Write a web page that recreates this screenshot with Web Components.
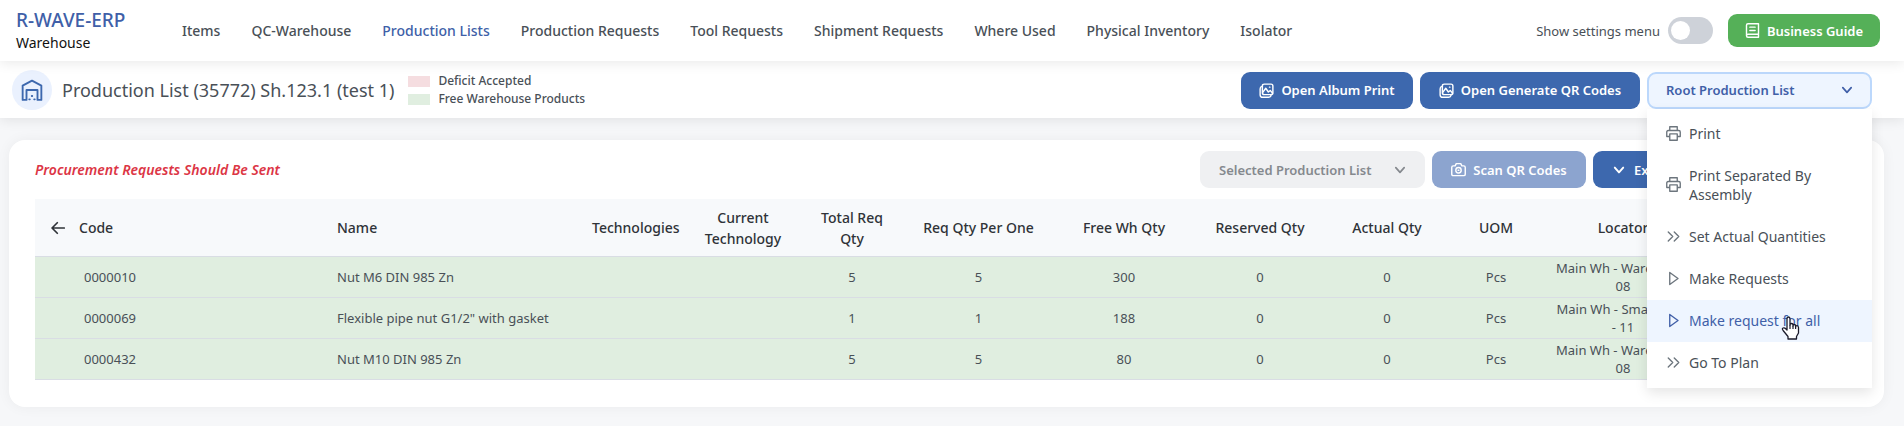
<!DOCTYPE html>
<html lang="en">
<head>
<meta charset="utf-8">
<title>Production Lists - R-WAVE-ERP</title>
<style>
  body { margin: 0; background: #f6f7f9; color: #495057; font-family: "Noto Sans", "Open Sans", sans-serif; }
</style>
</head>
<body>
<erp-app></erp-app>

<script>
const ICONS = {
  book: '<path d="M18 15H4q-2 0-2 2t2 2h14V1H4Q2 1 2 3v14"/><path d="M6.500 5.500h7M6.500 10h7"/>',
  images: '<path d="M7 1.500h9q2.500 0 2.500 2.500v9q0 2.500-2.500 2.500H7q-2.500 0-2.500-2.500V4Q4.500 1.500 7 1.500z"/><path d="M4 4.500Q1.500 5 1.500 8v7.500q0 3.500 3.500 3.500h8q2.500 0 3-2.500M5 12.500l4-5.500 3.500 5 2.500-2 3 3.500M14 5.500h.5"/>',
  camera: '<path d="M1 7.200q0-2 2-2h2.500l1.500-3h6l1.500 3H17q2 0 2 2v9q0 2-2 2H3q-2 0-2-2z"/><circle cx="10" cy="11" r="3.600"/><path d="M9.500 11h1"/>',
  printer: '<path d="M5 6V1h10v5M5 14H1V8q0-2 2-2h14q2 0 2 2v6h-4M5 10.500h10V19H5z"/>',
  right2: '<path d="M3 4l6 6-6 6M11 4l6 6-6 6"/>',
  play: '<path d="M5 2v16l11-8z"/>',
  down: '<path d="M3 6l7 8 7-8"/>',
  left: '<path d="M19 10H2M9 2.500L1.500 10 9 17.500"/>',
  house: '<path d="M1.500 19V6L10 1.500 18.500 6v13H15V10H5v9z"/><path d="M7.500 18.500h.5M12 18.500h.5M9.800 15.500h.4"/>'
};

class ErpIcon extends HTMLElement {
  connectedCallback() {
    const w = this.getAttribute('weight') || '1.800';
    this.attachShadow({ mode: 'open' }).innerHTML = `
      <style>
        :host { display: inline-flex; flex: none; width: 15px; height: 15px; }
        svg { width: 100%; height: 100%; }
      </style>
      <svg viewBox="0 0 20 20" fill="none" stroke="currentColor" stroke-width="${w}" stroke-linejoin="round" stroke-linecap="round" aria-hidden="true">${ICONS[this.getAttribute('name')]}</svg>`;
  }
}
customElements.define('erp-icon', ErpIcon);

class ErpButton extends HTMLElement {
  connectedCallback() {
    const off = this.hasAttribute('disabled') ? 'disabled' : '';
    this.attachShadow({ mode: 'open' }).innerHTML = `
      <style>
        :host { display: block; --bg: #3d68ae; --h: 37px; }
        :host([tone=green]) { --bg: #55b058; --h: 33px; }
        :host([disabled]) { --bg: #8ca4cf; }
        button { box-sizing: border-box; display: flex; align-items: center; justify-content: center; gap: 7px;
          width: 100%; height: var(--h); padding: 0 16px; border: 0; border-radius: 9px;
          background: var(--bg); color: #fff; font: 600 13px/18px "Noto Sans", sans-serif; white-space: nowrap; }
        :host([align=start]) button { justify-content: flex-start; padding: 0 20px; gap: 9px; }
        :host([align=start]) erp-icon { width: 12px; height: 12px; }
      </style>
      <button type="button" ${off}><erp-icon name="${this.getAttribute('icon')}" weight="${this.getAttribute('weight') || '1.900'}"></erp-icon><slot></slot></button>`;
  }
}
customElements.define('erp-button', ErpButton);

class ErpDropdown extends HTMLElement {
  connectedCallback() {
    const off = this.hasAttribute('disabled') ? 'disabled' : '';
    const open = this.hasAttribute('open');
    this.attachShadow({ mode: 'open' }).innerHTML = `
      <style>
        :host { display: block; position: relative; width: 225px; }
        button { box-sizing: border-box; display: flex; align-items: center; justify-content: space-between;
          width: 100%; height: 37px; padding: 0 17px; border: 2px solid #bcd8fc; border-radius: 9px;
          background: #eef5ff; color: #405fa8; font: 600 13px/18px "Noto Sans", sans-serif; }
        :host([disabled]) button { background: #eff0f2; border-color: #eff0f2; color: #85898e; }
        erp-icon { width: 12px; height: 12px; }
        .menu { position: absolute; z-index: 5; top: 100%; left: 0; right: 0; padding: 4px 0;
          background: #fff; box-shadow: 0 5px 12px rgba(0,0,0,.1); }
      </style>
      <button type="button" ${off} aria-haspopup="menu" aria-expanded="${open}">${this.getAttribute('label')}<erp-icon name="down" weight="2.800"></erp-icon></button>
      ${open ? '<div class="menu" role="menu"><slot></slot></div>' : ''}`;
  }
}
customElements.define('erp-dropdown', ErpDropdown);

class ErpMenuItem extends HTMLElement {
  connectedCallback() {
    const active = this.hasAttribute('active');
    this.attachShadow({ mode: 'open' }).innerHTML = `
      <style>
        :host { display: block; position: relative; }
        button { display: flex; align-items: center; gap: 8px; width: 100%; padding: 11px 18px 12px 19px; border: 0;
          background: none; color: #495057; font: 400 14px/19px "Noto Sans", sans-serif; text-align: left; }
        erp-icon { color: #6c757d; }
        :host([active]) button { background: #eef5ff; color: #405fa8; }
        :host([active]) erp-icon { color: #405fa8; }
        .hand { position: absolute; left: 134px; top: 16px; width: 19px; height: 24px; }
      </style>
      <button type="button" role="menuitem"><erp-icon name="${this.getAttribute('icon')}"></erp-icon><span><slot></slot></span></button>
      ${active ? `<svg class="hand" viewBox="0 0 19 24" aria-hidden="true"><path d="M6 14V3q0-2 1.500-2T9 3v6q0-1.500 1.500-1.500T12 9v1q0-1.500 1.300-1.500T14.600 10v1q0-1.300 1.300-1.300T17.500 11.500V17l-2 3.500V23H7v-2.500L2.500 15Q.5 12.500 2 12t3 1z" fill="#fff" stroke="#1b1b2b" stroke-width="1.300" stroke-linejoin="round"/><path d="M9 9v4M12 10v3M14.600 11v2" stroke="#1b1b2b" stroke-width="1.200" fill="none"/></svg>` : ''}`;
  }
}
customElements.define('erp-menu-item', ErpMenuItem);

class ErpHeader extends HTMLElement {
  connectedCallback() {
    const items = ['Items', 'QC-Warehouse', 'Production Lists', 'Production Requests', 'Tool Requests', 'Shipment Requests', 'Where Used', 'Physical Inventory', 'Isolator'];
    this.attachShadow({ mode: 'open' }).innerHTML = `
      <style>
        :host { display: block; position: relative; z-index: 3; }
        header { box-sizing: border-box; display: flex; align-items: center; min-height: 61px; padding: 0 24px 0 16px;
          background: #fff; box-shadow: 0 2px 12px rgba(0,0,0,.09); }
        .brand { width: 166px; }
        .brand a { display: block; color: #405fa8; font-weight: 500; font-size: 19px; line-height: 24px; text-decoration: none; }
        .brand span { display: block; color: #111; font-size: 14px; line-height: 22px; }
        nav { display: flex; flex: 1; gap: 31px; font-weight: 500; font-size: 14px; line-height: 20px; white-space: nowrap; }
        nav a { color: #495057; text-decoration: none; }
        nav a[aria-current] { color: #405fa8; }
        label { display: flex; align-items: center; gap: 8px; margin-right: 15px; font-size: 13px; line-height: 18px; }
        input { appearance: none; box-sizing: border-box; width: 45px; height: 27px; margin: 0; padding: 4px 3px; border-radius: 14px; background: #ced2d9; }
        input::before { content: ""; display: block; width: 19px; height: 19px; border-radius: 50%; background: #fff; }
        erp-button { width: 152px; }
      </style>
      <header>
        <div class="brand"><a href="#">R-WAVE-ERP</a><span>Warehouse</span></div>
        <nav>${items.map(t => `<a href="#"${t === 'Production Lists' ? ' aria-current="page"' : ''}>${t}</a>`).join('')}</nav>
        <label>Show settings menu<input type="checkbox" role="switch"></label>
        <erp-button tone="green" icon="book">Business Guide</erp-button>
      </header>`;
  }
}
customElements.define('erp-header', ErpHeader);

class ErpTitleBar extends HTMLElement {
  connectedCallback() {
    this.attachShadow({ mode: 'open' }).innerHTML = `
      <style>
        :host { display: block; position: relative; z-index: 2; }
        section { box-sizing: border-box; display: flex; align-items: center; min-height: 57px; padding: 1px 32px 0 12px;
          background: #fff; box-shadow: 0 2px 12px rgba(0,0,0,.09); }
        .badge { display: flex; align-items: center; justify-content: center; width: 40px; height: 40px; border-radius: 50%; background: #eaf1fe; color: #3d68ae; }
        .badge erp-icon { width: 22px; height: 22px; }
        h1 { margin: 0 14px 0 10px; font-weight: 400; font-size: 18px; line-height: 24px; white-space: nowrap; }
        ul { flex: 1; margin: 0; padding: 0; list-style: none; font-weight: 500; font-size: 12px; line-height: 18px; }
        li { display: flex; align-items: center; gap: 8px; }
        li::before { content: ""; width: 22px; height: 11px; background: #f5dde0; }
        li.free::before { background: #e0eee0; }
        .actions { display: flex; gap: 7px; }
        .album { width: 172px; }
        .qr { width: 220px; }
      </style>
      <section>
        <div class="badge"><erp-icon name="house" weight="1.700"></erp-icon></div>
        <h1>Production List (35772) Sh.123.1 (test 1)</h1>
        <ul><li>Deficit Accepted</li><li class="free">Free Warehouse Products</li></ul>
        <div class="actions">
          <erp-button class="album" icon="images">Open Album Print</erp-button>
          <erp-button class="qr" icon="images">Open Generate QR Codes</erp-button>
          <erp-dropdown label="Root Production List" open>
            <erp-menu-item icon="printer">Print</erp-menu-item>
            <erp-menu-item icon="printer">Print Separated By Assembly</erp-menu-item>
            <erp-menu-item icon="right2">Set Actual Quantities</erp-menu-item>
            <erp-menu-item icon="play">Make Requests</erp-menu-item>
            <erp-menu-item icon="play" active>Make request for all</erp-menu-item>
            <erp-menu-item icon="right2">Go To Plan</erp-menu-item>
          </erp-dropdown>
        </div>
      </section>`;
  }
}
customElements.define('erp-title-bar', ErpTitleBar);

class ErpTable extends HTMLElement {
  connectedCallback() {
    const heads = ['Technologies', 'Current Technology', 'Total Req Qty', 'Req Qty Per One', 'Free Wh Qty', 'Reserved Qty', 'Actual Qty', 'UOM', 'Locator'];
    const widths = [290, 255, 110, 106, 112, 141, 150, 122, 132, 86, 168, 151];
    const rows = [
      ['0000010', 'Nut M6 DIN 985 Zn', '', '', 5, 5, 300, 0, 0, 'Pcs', 'Main Wh - Warehouse<br>08'],
      ['0000069', 'Flexible pipe nut G1/2" with gasket', '', '', 1, 1, 188, 0, 0, 'Pcs', 'Main Wh - Small Parts<br>- 11'],
      ['0000432', 'Nut M10 DIN 985 Zn', '', '', 5, 5, 80, 0, 0, 'Pcs', 'Main Wh - Warehouse<br>08']
    ];
    this.attachShadow({ mode: 'open' }).innerHTML = `
      <style>
        :host { display: block; }
        table { width: 100%; table-layout: fixed; border-spacing: 0; font-size: 13px; line-height: 18px; text-align: center; }
        th, td { box-sizing: border-box; padding: 0 12px; border-bottom: 1px solid #d9dde4; }
        th { height: 58px; background: #f7f9fb; color: #2f3338; font-weight: 500; font-size: 14px; line-height: 21px; }
        td { height: 41px; padding: 0 4px; background: #e0eee0; }
        th:nth-child(-n+2), td:nth-child(-n+2) { text-align: left; }
        th:nth-child(2), td:nth-child(2) { padding: 0 12px; }
        td:first-child { padding-left: 49px; }
        th:first-child { padding-left: 16px; }
        .sort { display: flex; align-items: center; gap: 14px; }
        .sort erp-icon { width: 14px; height: 14px; }
      </style>
      <table>
        <colgroup>${widths.map(w => `<col style="width:${w}px">`).join('')}</colgroup>
        <thead><tr><th><span class="sort"><erp-icon name="left" weight="2.400"></erp-icon>Code</span></th><th>Name</th>${heads.map(h => `<th>${h}</th>`).join('')}<th></th></tr></thead>
        <tbody>${rows.map(r => `<tr>${r.map(c => `<td>${c}</td>`).join('')}<td></td></tr>`).join('')}</tbody>
      </table>`;
  }
}
customElements.define('erp-table', ErpTable);

class ErpCard extends HTMLElement {
  connectedCallback() {
    this.attachShadow({ mode: 'open' }).innerHTML = `
      <style>
        :host { display: block; margin: 22px 20px 0 9px; padding: 11px 26px 27px; border-radius: 16px; background: #fff; box-shadow: 0 0 14px rgba(0,0,0,.05); }
        .bar { display: flex; align-items: center; gap: 7px; margin-bottom: 11px; }
        p { flex: 1; margin: 0; color: #dc3545; font-weight: 600; font-style: italic; font-size: 14px; line-height: 20px; }
        .scan { width: 154px; }
        .export { width: 265px; }
      </style>
      <div class="bar">
        <p>Procurement Requests Should Be Sent</p>
        <erp-dropdown label="Selected Production List" disabled></erp-dropdown>
        <erp-button class="scan" icon="camera" disabled>Scan QR Codes</erp-button>
        <erp-button class="export" icon="down" weight="3.200" align="start">Export</erp-button>
      </div>
      <slot></slot>`;
  }
}
customElements.define('erp-card', ErpCard);

class ErpApp extends HTMLElement {
  connectedCallback() {
    this.attachShadow({ mode: 'open' }).innerHTML = `
      <style>:host { display: block; padding-bottom: 18px; }</style>
      <erp-header></erp-header>
      <erp-title-bar></erp-title-bar>
      <main><erp-card><erp-table></erp-table></erp-card></main>`;
  }
}
customElements.define('erp-app', ErpApp);
</script>
</body>
</html>
